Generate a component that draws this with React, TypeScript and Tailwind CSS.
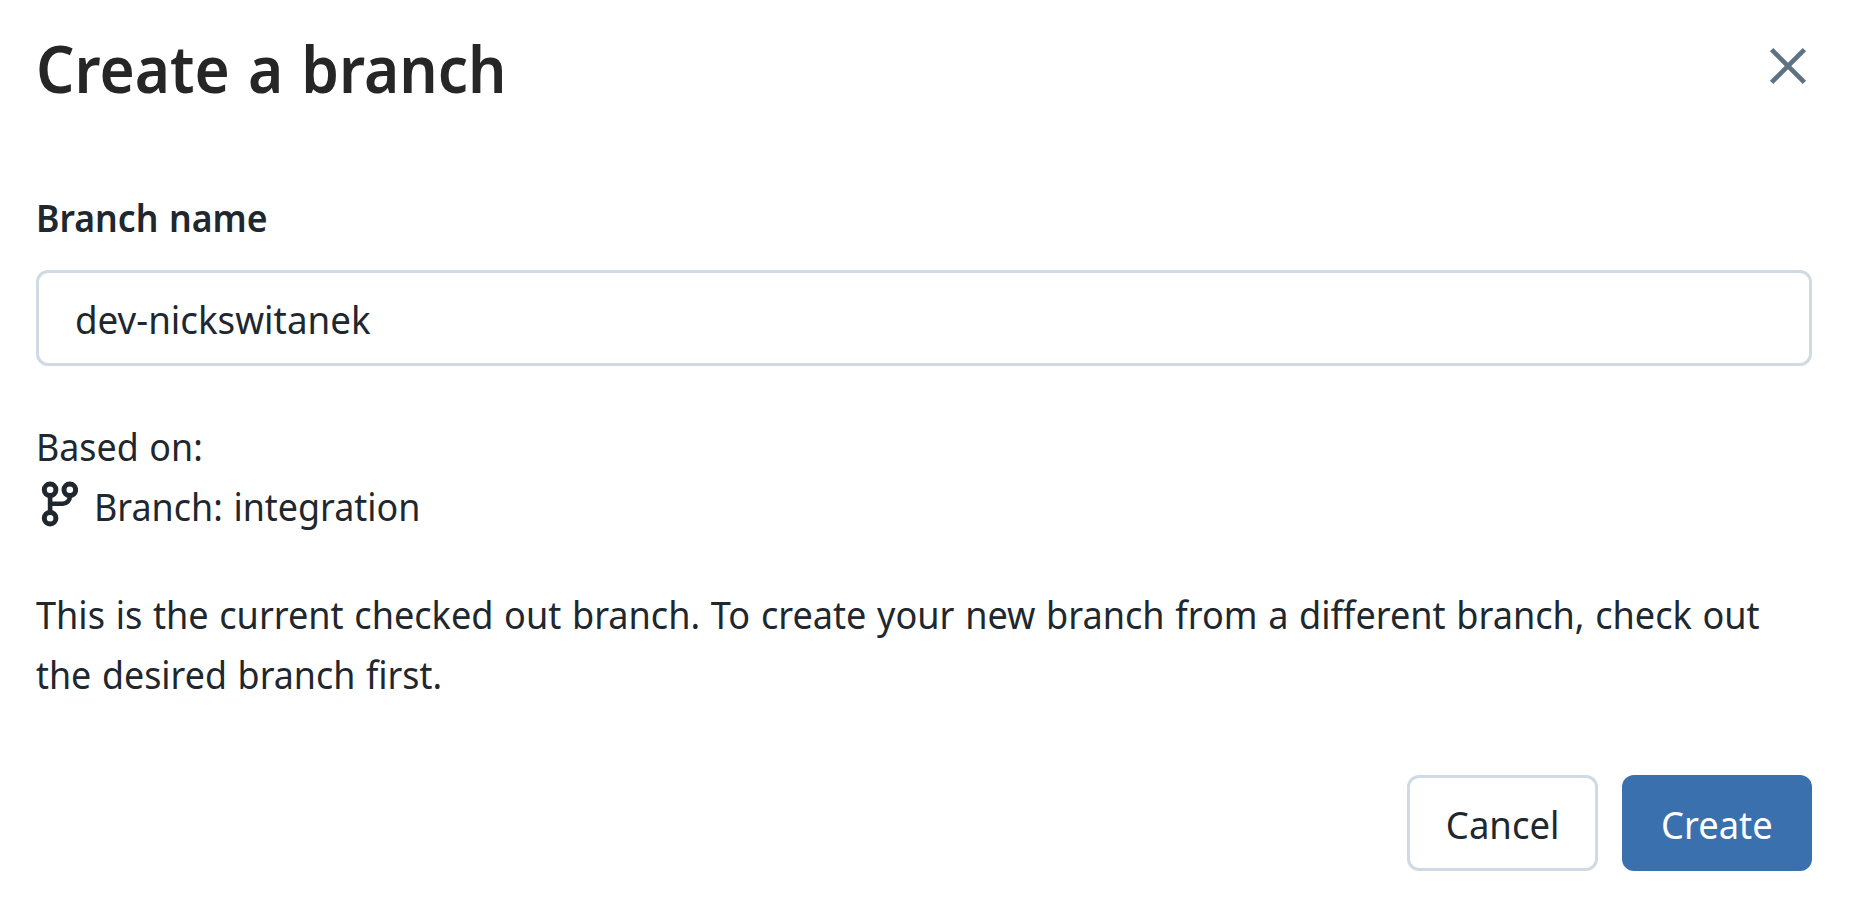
import React from "react";

function CloseIcon() {
  return (
    <svg width="38" height="38" viewBox="0 0 38 38" fill="none" stroke="#5f7281" strokeWidth="4.7">
      <path d="M2.6 2.6 35.4 35.4M35.4 2.6 2.6 35.4" />
    </svg>
  );
}

function BranchIcon() {
  return (
    <svg className="mt-[3px]" width="42" height="50" viewBox="0 0 42 50" fill="none" stroke="#20272e" strokeWidth="5">
      <circle cx="14.1" cy="10.8" r="5.8" />
      <circle cx="33.8" cy="10.8" r="5.8" />
      <circle cx="14.1" cy="39.2" r="5.8" />
      <path strokeWidth="4.6" d="M14.1 16.5v17M33.8 16.5v1.2a7 7 0 0 1-7 7H14.1" />
    </svg>
  );
}

export default function App() {
  return (
    <main className="flex h-[913px] w-[1875px] flex-col overflow-hidden bg-white pl-9 pr-[63px] font-['Noto_Sans',sans-serif] text-[38.3px] leading-[60px] text-[#20272e] [word-spacing:1.4px]">
      <header className="flex items-start justify-between pt-[24px]">
        <h1 className="text-[65px] font-semibold leading-[88px] text-[#262626] [word-spacing:2.6px]">
          <span className="inline-block origin-left scale-x-[0.928]">Create a branch</span>
        </h1>
        <button aria-label="Close" className="mr-[5px] mt-[23px]">
          <CloseIcon />
        </button>
      </header>
      <label htmlFor="branch-name" className="mt-[75px] font-semibold">
        <span className="inline-block origin-left scale-x-[0.93]">Branch name</span>
      </label>
      <div id="branch-name" className="mt-[23px] flex h-24 items-center rounded-xl border-3 border-[#cfdae5] px-9 pt-[2px]">
        <span className="inline-block origin-left scale-x-[0.96]">dev-nickswitanek</span>
      </div>
      <section className="mt-[50px]">
        <p className="origin-left scale-x-[0.935]">Based on:</p>
        <div className="flex items-start">
          <BranchIcon />
          <span className="ml-[16px] inline-block origin-left scale-x-[0.937]">Branch: integration</span>
        </div>
      </section>
      <p className="mt-12 whitespace-nowrap">
        <span className="inline-block origin-left scale-x-[0.942]">
          This is the current checked out branch. To create your new branch from a different branch, check out
        </span>
        <br />
        <span className="inline-block origin-left scale-x-[0.936]">the desired branch first.</span>
      </p>
      <footer className="mt-[71px] flex justify-end gap-6">
        <button className="h-24 w-[191px] rounded-xl border-3 border-[#cfdae5] pt-[2px]">
          <span className="inline-block scale-x-[0.952]">Cancel</span>
        </button>
        <button className="h-24 w-[190px] rounded-xl bg-[#3b70af] pt-[2px] text-white">
          <span className="inline-block scale-x-[0.947]">Create</span>
        </button>
      </footer>
    </main>
  );
}
